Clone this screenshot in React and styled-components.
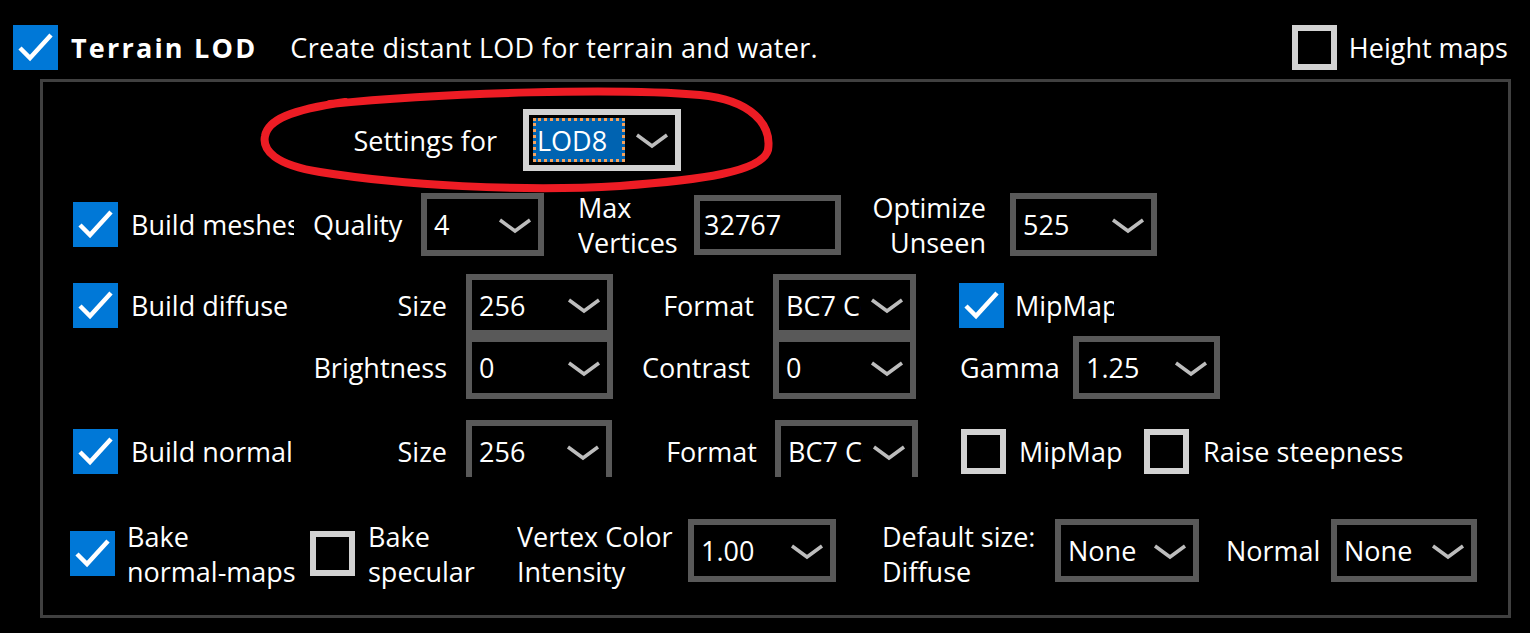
import React from 'react';
import styled, { createGlobalStyle } from 'styled-components';

const GlobalStyle = createGlobalStyle`
  html, body {
    margin: 0;
    padding: 0;
    background: #000;
  }
  body {
    font-family: "Open Sans", "Noto Sans", sans-serif;
    color: #fff;
  }
`;

// ----- icons
const CheckMark = () => (
  <svg width="45" height="45" viewBox="0 0 45 45">
    <polyline points="7,23 17,33 38,10" fill="none" stroke="#fff" strokeWidth="4.5" />
  </svg>
);

const Chevron = () => (
  <svg width="36" height="18" viewBox="0 0 36 18">
    <polyline points="3,4 18,15 33,4" fill="none" stroke="#bdbdbd" strokeWidth="3.5" />
  </svg>
);

const CheckBox = ({ checked, mt }) => (
  <Check $checked={checked} $mt={mt}>{checked ? <CheckMark /> : null}</Check>
);

const ComboBox = ({ value, w, h = 63, focus }) => (
  <ComboFrame $w={w} $h={h} $focus={focus}>
    {focus ? <Selected>{value}</Selected> : <ComboValue>{value}</ComboValue>}
    <Chevron />
  </ComboFrame>
);

const App = () => {
  return (
    <Page>
      <GlobalStyle />

      {/* 상단 */}
      <Header>
        <CheckBox checked />
        <Title>Terrain LOD</Title>
        <Desc>Create distant LOD for terrain and water.</Desc>
        <HeaderRight>
          <CheckBox />
          <Slot $ml={12}>Height maps</Slot>
        </HeaderRight>
      </Header>

      <GroupBox>
        {/* LOD 선택 */}
        <Row $mt={27} $h={62} $pl={264}>
          <Slot $w={216} $pr={26} $right>Settings for</Slot>
          <ComboBox value="LOD8" w={158} h={62} focus />
        </Row>

        {/* meshes */}
        <Row $mt={22} $pl={30}>
          <CheckBox checked />
          <Slot $ml={13} $w={163}>Build meshes</Slot>
          <Slot $ml={19} $w={108}>Quality</Slot>
          <ComboBox value="4" w={123} />
          <Slot $ml={34} $w={116}>Max<br />Vertices</Slot>
          <TextBox>32767</TextBox>
          <Slot $w={145} $right>Optimize<br />Unseen</Slot>
          <Spacer $w={24} />
          <ComboBox value="525" w={147} />
        </Row>

        {/* diffuse */}
        <Row $mt={18} $h={62} $pl={30}>
          <CheckBox checked />
          <Slot $ml={13} $w={182}>Build diffuse</Slot>
          <Slot $w={134} $right>Size</Slot>
          <Spacer $w={19} />
          <ComboBox value="256" w={147} h={62} />
          <Slot $w={160} $pr={19} $right>Format</Slot>
          <ComboBox value="BC7 Compressed" w={143} h={62} />
          <Spacer $w={43} />
          <CheckBox checked />
          <Slot $ml={11} $w={99}>MipMap</Slot>
        </Row>
        <Row $h={63} $pl={270}>
          <Slot $w={134} $right>Brightness</Slot>
          <Spacer $w={19} />
          <ComboBox value="0" w={147} />
          <Slot $w={160} $pr={23} $right>Contrast</Slot>
          <ComboBox value="0" w={143} />
          <Slot $ml={44} $w={113}>Gamma</Slot>
          <ComboBox value="1.25" w={147} />
        </Row>

        {/* normal - 아래쪽이 잘려 보임 */}
        <Clip>
          <Row $pl={30}>
            <CheckBox checked />
            <Slot $ml={13} $w={182}>Build normal</Slot>
            <Slot $w={134} $right>Size</Slot>
            <Spacer $w={19} />
            <ComboBox value="256" w={146} />
            <Slot $w={163} $pr={18} $right>Format</Slot>
            <ComboBox value="BC7 Compressed" w={143} />
            <Spacer $w={43} />
            <CheckBox />
            <Slot $ml={13} $w={125}>MipMap</Slot>
            <CheckBox />
            <Slot $ml={14}>Raise steepness</Slot>
          </Row>
        </Clip>

        {/* bake */}
        <Row $mt={42} $pl={27}>
          <CheckBox checked mt={6} />
          <Slot $ml={12} $w={183} $mt={7}>Bake<br />normal-maps</Slot>
          <CheckBox mt={6} />
          <Slot $ml={13} $w={149} $mt={7}>Bake<br />specular</Slot>
          <Slot $w={171} $mt={7}>Vertex Color<br />Intensity</Slot>
          <ComboBox value="1.00" w={148} />
          <Slot $ml={46} $w={173} $mt={7}>Default size:<br />Diffuse</Slot>
          <ComboBox value="None" w={144} />
          <Slot $ml={27} $w={105}>Normal</Slot>
          <ComboBox value="None" w={146} />
        </Row>
      </GroupBox>

      {/* 빨간 표시 */}
      <Marker width="1530" height="633" viewBox="0 0 1530 633">
        <path
          d="M 330 104 C 450 92, 620 88, 700 95 C 752 100, 772 125, 768 150 C 762 172, 700 180, 620 186 C 520 192, 400 185, 320 172 C 275 165, 262 150, 265 136 C 268 120, 290 110, 345 102"
          fill="none"
          stroke="#ed1c24"
          strokeWidth="8"
          strokeLinecap="round"
        />
      </Marker>
    </Page>
  );
};

export default App;

const Page = styled.div`
  position: relative;
  width: 1530px;
  height: 633px;
  background: #000;
  overflow: hidden;
  font-size: 27px;
  line-height: 35px;
  padding-top: 25px;
  box-sizing: border-box;
`;

// ----- header
const Header = styled.div`
  display: flex;
  align-items: center;
  height: 45px;
  padding: 0 22px 0 13px;
`;
const Title = styled.div`
  margin-left: 13px;
  font-weight: 700;
  letter-spacing: 2.2px;
  white-space: nowrap;
`;
const Desc = styled.div`
  margin-left: 33px;
  letter-spacing: 0.3px;
  white-space: nowrap;
`;
const HeaderRight = styled.div`
  margin-left: auto;
  display: flex;
  align-items: center;
`;

// ----- group box
const GroupBox = styled.div`
  box-sizing: border-box;
  width: 1471px;
  height: 539px;
  margin: 9px 0 0 40px;
  border: 3px solid #404040;
  display: flex;
  flex-direction: column;
`;
const Row = styled.div`
  display: flex;
  align-items: center;
  flex-shrink: 0;
  height: ${p => p.$h || 63}px;
  margin-top: ${p => p.$mt || 0}px;
  padding-left: ${p => p.$pl || 0}px;
`;
const Clip = styled.div`
  height: 57px;
  margin-top: 21px;
  overflow: hidden;
  flex-shrink: 0;
`;
const Slot = styled.div`
  flex-shrink: 0;
  box-sizing: border-box;
  width: ${p => (p.$w ? `${p.$w}px` : 'auto')};
  margin-left: ${p => p.$ml || 0}px;
  margin-top: ${p => p.$mt || 0}px;
  padding-right: ${p => p.$pr || 0}px;
  text-align: ${p => (p.$right ? 'right' : 'left')};
  white-space: nowrap;
  overflow: hidden;
`;
const Spacer = styled.div`
  flex-shrink: 0;
  width: ${p => p.$w}px;
`;

// ----- controls
const Check = styled.div`
  flex-shrink: 0;
  box-sizing: border-box;
  width: 45px;
  height: 45px;
  margin-top: ${p => p.$mt || 0}px;
  background: ${p => (p.$checked ? '#0078d7' : '#000')};
  border: ${p => (p.$checked ? 'none' : '6px solid #d2d2d2')};
  svg {
    display: block;
  }
`;
const ComboFrame = styled.div`
  flex-shrink: 0;
  box-sizing: border-box;
  width: ${p => p.$w}px;
  height: ${p => p.$h}px;
  border: 6px solid ${p => (p.$focus ? '#d3d3d3' : '#595959')};
  display: flex;
  align-items: center;
  padding: 0 5px 0 ${p => (p.$focus ? 4 : 7)}px;
  svg {
    flex-shrink: 0;
  }
`;
const ComboValue = styled.div`
  flex: 1;
  min-width: 0;
  margin-right: 8px;
  white-space: nowrap;
  overflow: hidden;
`;
const Selected = styled.div`
  box-sizing: border-box;
  width: 92px;
  height: 44px;
  margin-right: 9px;
  padding-left: 1px;
  background: #0063b1;
  border: 3px dotted #f5a25d;
  display: flex;
  align-items: center;
`;
const TextBox = styled.div`
  flex-shrink: 0;
  box-sizing: border-box;
  width: 147px;
  height: 60px;
  border: 6px solid #595959;
  padding-left: 4px;
  display: flex;
  align-items: center;
`;
const Marker = styled.svg`
  position: absolute;
  left: 0;
  top: 0;
  pointer-events: none;
`;
